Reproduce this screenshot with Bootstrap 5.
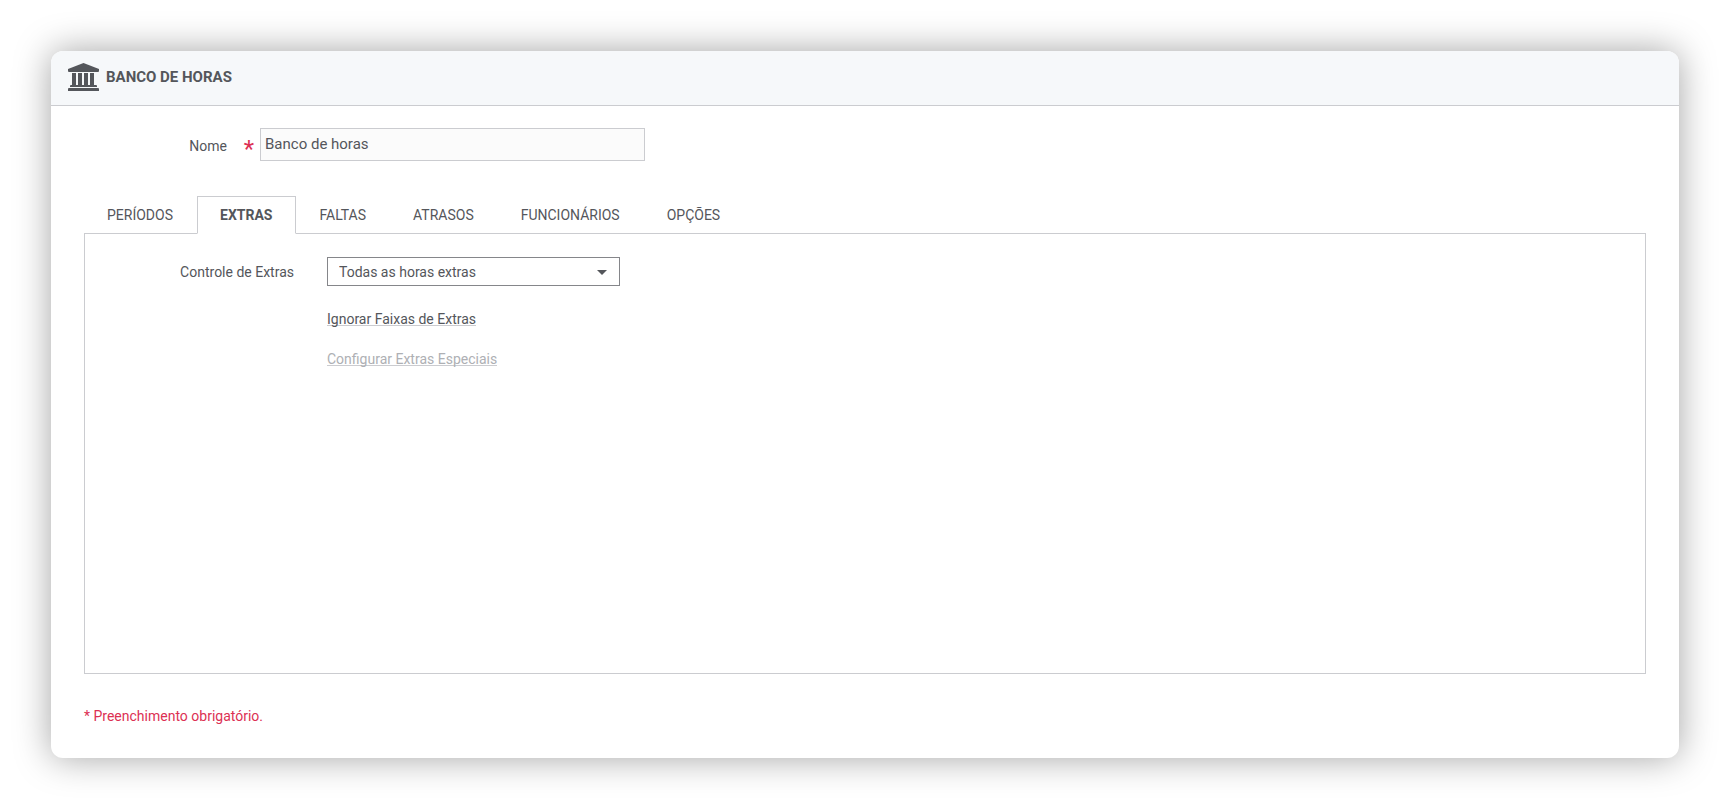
<!DOCTYPE html>
<html lang="pt-BR">
<head>
<meta charset="utf-8">
<meta name="viewport" content="width=device-width, initial-scale=1">
<title>Banco de Horas</title>
<link href="https://cdn.jsdelivr.net/npm/bootstrap@5.3.0/dist/css/bootstrap.min.css" rel="stylesheet">
<style>
  body { font-family: Roboto, "Liberation Sans", sans-serif; font-size: 14px; line-height: 20px; color: #54565b; background: #fff; padding: 51px 51px 50px; }
  .panel { --bs-card-border-width: 0; --bs-card-border-radius: 12px; --bs-card-inner-border-radius: 12px; box-shadow: 0 0 36px rgba(0, 0, 0, .36); color: inherit; min-height: calc(100vh - 101px); }
  .panel-head { height: 55px; padding: 0 17px 2px; gap: 7px; background: #f6f8fa; border-bottom: 1px solid #cbccd0; }
  .panel-head h1 { font-size: 15px; line-height: 20px; }
  .panel-main { padding: 22px 33px 32px; }
  .name-row { height: 33px; margin-bottom: 35px; }
  .name-label { width: 143px; padding-top: 2px; }
  .star { width: 33px; padding-right: 6px; padding-top: 8px; font-size: 24px; line-height: 24px; color: #dc3053; }
  .name-input { width: 385px; height: 33px; padding: 0 4px 2px; font-size: 15px; color: #54565b; background: #fbfbfb; border: 1px solid #cbccd0; border-radius: 0; }
  .tab-bar { --bs-nav-tabs-border-color: #cbccd0; --bs-nav-tabs-border-radius: 0; --bs-nav-link-color: #54565b; --bs-nav-link-hover-color: #54565b; --bs-nav-tabs-link-active-color: #54565b; --bs-nav-tabs-link-active-border-color: #cbccd0 #cbccd0 #fff; }
  .tab-bar .nav-link { height: 38px; padding: 8px 23px 8px 22px; font-size: 14px; line-height: 20px; }
  .pane { border: 1px solid #cbccd0; border-top: 0; padding: 23px 0; }
  .pane-label { width: 209px; }
  .pick { width: 293px; height: 29px; margin-left: 33px; padding: 0 32px 0 11px; font-size: 14px; line-height: 20px; color: #54565b; border: 1px solid #85868a; border-radius: 0; background-image: url("data:image/svg+xml,%3Csvg xmlns='http://www.w3.org/2000/svg' viewBox='0 0 10 5'%3E%3Cpath fill='%2354565b' d='M0 0h10L5 5z'/%3E%3C/svg%3E"); background-size: 10px 5px; background-position: right 12px top 12px; }
  .pane-links { margin-left: 242px; margin-top: 23px; gap: 23px; }
  .pane-links a { color: #54565b; text-decoration: none; line-height: 20px; height: 17px; border-bottom: 1px solid #cbccd0; }
  .pane-links a.disabled { color: #aeb0b4; }
  .required-note { color: #dc3053; margin-top: 32px; }
</style>
</head>
<body>
<main class="card panel overflow-visible">
  <header class="card-header panel-head d-flex align-items-center">
    <svg width="31" height="28" viewBox="0 0 31 28" fill="#54565b" aria-hidden="true">
      <path d="M15.500 0 31 6v2q0 1-1 1H1Q0 9 0 8V6z"/>
      <path d="M4 10h4v12H4zM10 10h4v12h-4zM16 10h4v12h-4zM22 10h4v12h-4z"/>
      <path d="M3 22h25q1 0 1 1v1H2v-1q0-1 1-1zM1 25h29q1 0 1 1v2H0v-2q0-1 1-1z"/>
    </svg>
    <h1 class="mb-0 fw-bold">BANCO DE HORAS</h1>
  </header>
  <div class="card-body panel-main d-flex flex-column">
    <div class="name-row d-flex align-items-center">
      <label class="name-label text-end" for="nome">Nome</label>
      <span class="star text-end" aria-hidden="true">*</span>
      <input class="form-control name-input" id="nome" type="text" value="Banco de horas" required>
    </div>
    <nav class="nav nav-tabs tab-bar">
      <a class="nav-link" href="#">PERÍODOS</a>
      <a class="nav-link active fw-bold" aria-current="page" href="#">EXTRAS</a>
      <a class="nav-link" href="#">FALTAS</a>
      <a class="nav-link" href="#">ATRASOS</a>
      <a class="nav-link" href="#">FUNCIONÁRIOS</a>
      <a class="nav-link" href="#">OPÇÕES</a>
    </nav>
    <section class="pane flex-grow-1">
      <div class="d-flex align-items-center">
        <label class="pane-label text-end" for="controle">Controle de Extras</label>
        <select class="form-select pick" id="controle">
          <option>Todas as horas extras</option>
        </select>
      </div>
      <div class="pane-links d-flex flex-column align-items-start">
        <a href="#">Ignorar Faixas de Extras</a>
        <a class="disabled" href="#" aria-disabled="true">Configurar Extras Especiais</a>
      </div>
    </section>
    <p class="required-note mb-0">* Preenchimento obrigatório.</p>
  </div>
</main>
<script src="https://cdn.jsdelivr.net/npm/bootstrap@5.3.0/dist/js/bootstrap.bundle.min.js"></script>
</body>
</html>
